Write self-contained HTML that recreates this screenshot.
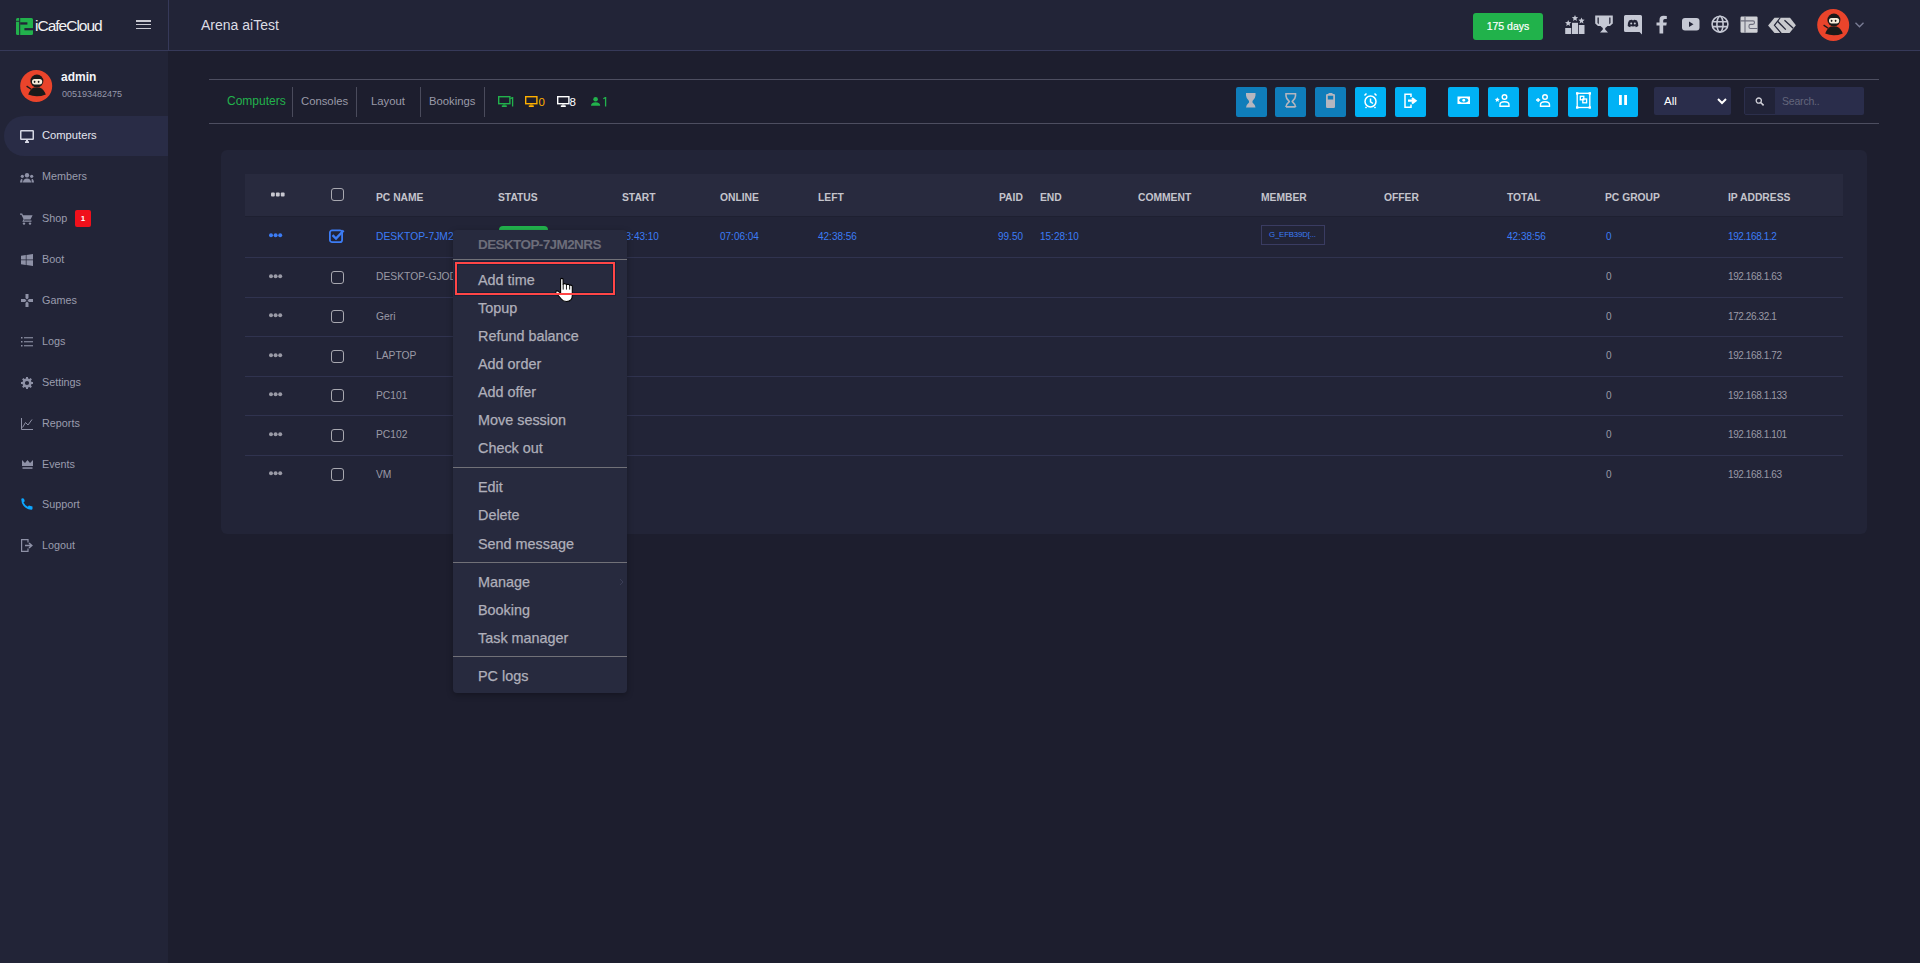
<!DOCTYPE html>
<html><head><meta charset="utf-8">
<style>
*{box-sizing:border-box;margin:0;padding:0}
html,body{width:1920px;height:963px;overflow:hidden;background:#1d1e2e;font-family:"Liberation Sans",sans-serif}
.abs{position:absolute}
#hdr{position:absolute;left:0;top:0;width:1920px;height:51px;background:#222437;border-bottom:1px solid #363959}
#side{position:absolute;left:0;top:51px;width:168px;height:912px;background:#222437}
.vdiv{position:absolute;left:168px;top:0;width:1px;height:50px;background:#363959}
.nav{position:absolute;left:0;width:168px;height:40px;font-size:11px;color:#9a9cae;white-space:nowrap}
.nav .ic{position:absolute;left:20px;top:13px}
.nav .tx{position:absolute;left:42px;top:13px;line-height:14px}
.nav.act{left:4px;width:164px;background:#292c46;border-radius:20px 0 0 20px}
.nav.act .ic{left:16px}.nav.act .tx{left:38px;color:#e6e8f0}
.tab{position:absolute;top:94px;font-size:11.3px;line-height:14px;color:#9a9aa8;white-space:nowrap}
.tdiv{position:absolute;top:87px;width:1px;height:30px;background:#4a4b5c}
.hline{position:absolute;left:209px;width:1670px;height:1px;background:#4d4e60}
.btn{position:absolute;top:87px;width:31px;height:30px;border-radius:2px;background:#00b2f5}
.btn.dim{background:#0f7dba}
.btn svg{position:absolute;left:0;top:0}
#card{position:absolute;left:221px;top:150px;width:1646px;height:384px;background:#222437;border-radius:6px}
#thead{position:absolute;left:245px;top:174px;width:1598px;height:42px;background:#282a3e}
.th{position:absolute;top:192.5px;font-size:10.3px;font-weight:700;color:#c4c4cc;line-height:10px;white-space:nowrap}
.row{position:absolute;left:245px;width:1598px;border-bottom:1px solid #33365a}
.td{position:absolute;font-size:10px;color:#9b9ba8;line-height:12px;white-space:nowrap}
.blue{color:#3c7cf5}
.cb{position:absolute;left:331px;width:13px;height:13px;border:1.5px solid #a8a8b0;border-radius:3px}
.dots{position:absolute;width:14px;height:4px}
#menu{position:absolute;left:453px;top:230px;width:174px;height:463px;background:#272a3e;border-radius:4px;box-shadow:0 2px 6px rgba(0,0,0,.3)}
.mi{position:absolute;left:478px;font-size:14.4px;color:#afafba;line-height:16px;white-space:nowrap;-webkit-text-stroke:0.25px #afafba}
.mdiv{position:absolute;left:453px;width:174px;height:1px;background:#717178}
</style></head><body>
<!-- HEADER -->
<div id="hdr">
  <div class="vdiv"></div>
  <!-- logo -->
  <svg class="abs" style="left:16px;top:18px" width="18" height="18" viewBox="0 0 18 18">
    <rect x="0" y="0" width="17" height="17" rx="1.5" fill="#22b14c"/>
    <rect x="3.2" y="0" width="1" height="17" fill="#222437"/>
    <rect x="0" y="2.8" width="3.2" height="0.9" fill="#222437"/>
    <rect x="4.2" y="4.3" width="7.2" height="2.3" fill="#222437"/>
    <rect x="8.4" y="10.1" width="8.6" height="2.2" fill="#222437"/>
  </svg>
  <div class="abs" style="left:35px;top:17px;font-size:15.5px;color:#f2f2f2;letter-spacing:-1px;line-height:18px;font-weight:400">iCafeCloud</div>
  <!-- hamburger -->
  <div class="abs" style="left:136px;top:20px;width:15px;height:1.6px;background:#c8c8d0"></div>
  <div class="abs" style="left:136px;top:23.8px;width:15px;height:1.6px;background:#c8c8d0"></div>
  <div class="abs" style="left:136px;top:27.6px;width:15px;height:1.6px;background:#c8c8d0"></div>
  <div class="abs" style="left:201px;top:17px;font-size:14px;color:#dcdce4;line-height:16px;white-space:nowrap">Arena aiTest</div>
  <!-- days -->
  <div class="abs" style="left:1473px;top:13px;width:70px;height:27px;background:#21b24b;border-radius:3px;color:#fff;font-size:10.5px;line-height:26px;text-align:center;-webkit-text-stroke:0.2px #fff">175 days</div>
  <!-- podium -->
  <svg class="abs" style="left:1565px;top:14px" width="20" height="21" viewBox="0 0 20 21" fill="#c5c8d4">
    <rect x="0.2" y="14" width="6" height="6"/><rect x="7" y="8.8" width="6" height="11.2"/><rect x="13.8" y="11" width="5.7" height="9"/>
    <path d="M3.20 6.00 L4.07 8.10 L6.34 8.28 L4.61 9.76 L5.14 11.97 L3.20 10.79 L1.26 11.97 L1.79 9.76 L0.06 8.28 L2.33 8.10Z"/>
    <path d="M10.00 1.00 L10.87 3.10 L13.14 3.28 L11.41 4.76 L11.94 6.97 L10.00 5.79 L8.06 6.97 L8.59 4.76 L6.86 3.28 L9.13 3.10Z"/>
    <path d="M16.50 3.50 L17.37 5.60 L19.64 5.78 L17.91 7.26 L18.44 9.47 L16.50 8.29 L14.56 9.47 L15.09 7.26 L13.36 5.78 L15.63 5.60Z"/>
  </svg>
  <!-- trophy -->
  <svg class="abs" style="left:1595px;top:15px" width="18" height="18" viewBox="0 0 18 18" fill="#c5c8d4">
    <path d="M0.2 0.5H17.8V8.5L15 11H12.5Q11 12.5 10.2 13V14.5L13 17.5H5L7.8 14.5V13Q7 12.5 5.5 11H3L0.2 8.5Z M2.5 2.5V8L3.8 9.2V2.5Z M15.5 2.5H14.2V9.2L15.5 8Z"/>
  </svg>
  <!-- discord -->
  <svg class="abs" style="left:1624px;top:15px" width="19" height="20" viewBox="0 0 19 20">
    <path d="M1.5 0H16.5Q18 0 18 1.5V19.5L15.5 17H1.5Q0 17 0 15.5V1.5Q0 0 1.5 0Z" fill="#c5c8d4"/>
    <path d="M5 5.5Q7 4.6 8 4.8L8.3 5.3Q9 5.2 9.7 5.3L10 4.8Q11 4.6 13 5.5Q14.5 8 14.3 11Q13 12 11.8 12.2L11.2 11.3Q12 11 12.3 10.7Q9 12.2 5.7 10.7Q6 11 6.8 11.3L6.2 12.2Q5 12 3.7 11Q3.5 8 5 5.5Z" fill="#222437"/>
    <circle cx="7.2" cy="8.6" r="1" fill="#c5c8d4"/><circle cx="10.8" cy="8.6" r="1" fill="#c5c8d4"/>
  </svg>
  <!-- facebook -->
  <svg class="abs" style="left:1656px;top:15px" width="12" height="19" viewBox="0 0 12 19" fill="#c5c8d4">
    <path d="M3.5 18.5V10.5H0.5V7.5H3.5V5Q3.5 0.8 7.5 0.8Q9.5 0.8 10.8 1V4H8.8Q7.2 4 7.2 5.5V7.5H10.8L10.3 10.5H7.2V18.5Z"/>
  </svg>
  <!-- youtube -->
  <svg class="abs" style="left:1682px;top:18px" width="18" height="13" viewBox="0 0 18 13">
    <rect x="0" y="0" width="17.5" height="12.5" rx="3" fill="#c5c8d4"/>
    <path d="M7 3.5V9L11.5 6.2Z" fill="#222437"/>
  </svg>
  <!-- globe -->
  <svg class="abs" style="left:1711px;top:15px" width="18" height="18" viewBox="0 0 18 18" fill="none" stroke="#c5c8d4" stroke-width="1.6">
    <circle cx="9" cy="9.2" r="7.9"/><ellipse cx="9" cy="9.2" rx="3.1" ry="7.9"/><path d="M1.3 6.8H16.7M1.3 11.6H16.7"/>
  </svg>
  <!-- icafe small -->
  <svg class="abs" style="left:1740px;top:16px" width="18" height="17" viewBox="0 0 18 17">
    <rect x="0.5" y="0.5" width="17.1" height="16.3" rx="1.2" fill="#d0d1d6"/>
    <path d="M5 0.5V16.8M0.5 4.9H13Q14.5 4.9 14.5 6.6Q14.5 8.4 12.8 8.4H10.5Q9 8.4 9 10V11Q9 12.5 10.5 12.5H17.6" stroke="#6c6d7c" stroke-width="1.1" fill="none"/>
  </svg>
  <!-- ggleap -->
  <svg class="abs" style="left:1764px;top:12px" width="36" height="26" viewBox="0 0 36 26">
    <path d="M4.1 13.4L10.5 5.8H26L31.9 13.3L25.6 21H10.5Z" fill="#c8c9ce"/>
    <path d="M16.4 5.5L10.4 13.3L17.3 21.3" stroke="#222437" stroke-width="1.2" fill="none"/>
    <path d="M13.6 9.3L21.8 17.6" stroke="#222437" stroke-width="1.3" fill="none"/>
    <path d="M20.5 8.3L29.2 16.3" stroke="#222437" stroke-width="1.3" fill="none"/>
  </svg>
  <!-- avatar -->
  <svg class="abs" style="left:1817px;top:9px" width="33" height="33" viewBox="0 0 33 33"><circle cx="16.2" cy="16" r="16" fill="#ea442b"/>
  <path d="M8.2 24.6Q10.3 19.2 13.8 17.6H19.6Q23.8 19.2 25.8 24.4Q17 28 8.2 24.6Z" fill="#1b1a1a"/>
  <circle cx="16.9" cy="11" r="6.5" fill="#1b1a1a"/>
  <rect x="12" y="9" width="10.2" height="5.4" rx="2.6" fill="#f6eddb"/>
  <ellipse cx="14.6" cy="11.8" rx="0.9" ry="1.1" fill="#1b1a1a"/><ellipse cx="18.6" cy="11.8" rx="0.9" ry="1.1" fill="#1b1a1a"/>
  <path d="M6.6 16.1L11.2 19.3" stroke="#1b1a1a" stroke-width="1.4"/></svg>
  <svg class="abs" style="left:1855px;top:22px" width="9" height="6" viewBox="0 0 9 6" fill="none" stroke="#7a7d95" stroke-width="1.3"><path d="M0.5 0.7L4.5 4.8L8.5 0.7"/></svg>
</div>

<!-- SIDEBAR -->
<div id="side"></div>
<!-- profile -->
<svg class="abs" style="left:20px;top:70px" width="33" height="33" viewBox="0 0 33 33"><circle cx="16.2" cy="16" r="16" fill="#ea442b"/>
  <path d="M8.2 24.6Q10.3 19.2 13.8 17.6H19.6Q23.8 19.2 25.8 24.4Q17 28 8.2 24.6Z" fill="#1b1a1a"/>
  <circle cx="16.9" cy="11" r="6.5" fill="#1b1a1a"/>
  <rect x="12" y="9" width="10.2" height="5.4" rx="2.6" fill="#f6eddb"/>
  <ellipse cx="14.6" cy="11.8" rx="0.9" ry="1.1" fill="#1b1a1a"/><ellipse cx="18.6" cy="11.8" rx="0.9" ry="1.1" fill="#1b1a1a"/>
  <path d="M6.6 16.1L11.2 19.3" stroke="#1b1a1a" stroke-width="1.4"/></svg>
<div class="abs" style="left:61px;top:71px;font-size:12px;font-weight:700;color:#f4f4f8;line-height:13px">admin</div>
<div class="abs" style="left:62px;top:89px;font-size:9px;color:#9698aa;line-height:10px">005193482475</div>

<div class="nav act" style="top:116px">
  <svg class="ic" style="left:16px;top:14px" width="14" height="13" viewBox="0 0 14 13" fill="none" stroke="#d6d8e4" stroke-width="1.5"><rect x="0.75" y="0.75" width="12.5" height="8.5" rx="0.5"/><path d="M5 12.2H9M7 9.5V12" stroke-width="2"/></svg>
  <div class="tx" style="top:12px;font-size:11.2px;color:#e4e6ef">Computers</div>
</div>
<div class="nav" style="top:156px">
  <svg class="ic" style="top:17px" width="14" height="10" viewBox="0 0 14 10" fill="#8e91a6"><circle cx="7" cy="2.2" r="2.2"/><circle cx="2.3" cy="3.3" r="1.6"/><circle cx="11.7" cy="3.3" r="1.6"/><path d="M2.8 9.5Q3.5 5.5 7 5.5Q10.5 5.5 11.2 9.5Z"/><path d="M0 9.5Q0.3 6 2.3 5.8L2.5 9.5Z M14 9.5Q13.7 6 11.7 5.8L11.5 9.5Z"/></svg>
  <div class="tx" style="font-size:10.8px">Members</div>
</div>
<div class="nav" style="top:198px">
  <svg class="ic" style="top:15px" width="13" height="12" viewBox="0 0 13 12" fill="#8e91a6"><path d="M0 0.5H2.2L3 2.2H12.6L10.5 6.5H4.4L3.8 7.5H11.5V8.7H2.3L3.6 6.3L1.4 1.7H0Z"/><circle cx="4" cy="10.6" r="1.2"/><circle cx="10" cy="10.6" r="1.2"/></svg>
  <div class="tx" style="font-size:10.8px">Shop</div>
  <div class="abs" style="left:75px;top:12px;width:16px;height:17px;background:#f0101b;border-radius:2px;color:#fff;font-size:8px;font-weight:700;line-height:17px;text-align:center">1</div>
</div>
<div class="nav" style="top:239px">
  <svg class="ic" style="left:21px;top:15px" width="12" height="12" viewBox="0 0 12 12" fill="#8e91a6"><path d="M0 1.8L4.8 1.1V5.6H0Z M5.5 1L12 0V5.6H5.5Z M0 6.3H4.8V10.9L0 10.2Z M5.5 6.3H12V12L5.5 11Z"/></svg>
  <div class="tx" style="font-size:10.8px">Boot</div>
</div>
<div class="nav" style="top:280px">
  <svg class="ic" style="left:21px;top:14px" width="12" height="13" viewBox="0 0 12 13" fill="#8e91a6"><path d="M4.5 0H7.5V4L6 5.5L4.5 4Z M4.5 13H7.5V9L6 7.5L4.5 9Z M0 5H4L5.5 6.5L4 8H0Z M12 5H8L6.5 6.5L8 8H12Z"/></svg>
  <div class="tx" style="font-size:10.8px">Games</div>
</div>
<div class="nav" style="top:321px">
  <svg class="ic" style="left:21px;top:16px" width="12" height="10" viewBox="0 0 12 10" fill="#8e91a6"><rect x="0" y="0" width="1.5" height="1.5"/><rect x="0" y="4" width="1.5" height="1.5"/><rect x="0" y="8" width="1.5" height="1.5"/><rect x="3" y="0.2" width="9" height="1.1"/><rect x="3" y="4.2" width="9" height="1.1"/><rect x="3" y="8.2" width="9" height="1.1"/></svg>
  <div class="tx" style="font-size:10.8px">Logs</div>
</div>
<div class="nav" style="top:362px">
  <svg class="ic" style="left:21px;top:15px" width="12" height="12" viewBox="0 0 12 12" fill="#8e91a6" fill-rule="evenodd"><path d="M4.92 1.53 L5.08 -0.03 L6.92 -0.03 L7.08 1.53 L8.40 2.07 L9.61 1.09 L10.91 2.39 L9.93 3.60 L10.47 4.92 L12.03 5.08 L12.03 6.92 L10.47 7.08 L9.93 8.40 L10.91 9.61 L9.61 10.91 L8.40 9.93 L7.08 10.47 L6.92 12.03 L5.08 12.03 L4.92 10.47 L3.60 9.93 L2.39 10.91 L1.09 9.61 L2.07 8.40 L1.53 7.08 L-0.03 6.92 L-0.03 5.08 L1.53 4.92 L2.07 3.60 L1.09 2.39 L2.39 1.09 L3.60 2.07Z M6 3.9 A2.1 2.1 0 1 0 6 8.1 A2.1 2.1 0 1 0 6 3.9Z"/></svg>
  <div class="tx" style="font-size:10.8px">Settings</div>
</div>
<div class="nav" style="top:403px">
  <svg class="ic" style="left:21px;top:15px" width="12" height="12" viewBox="0 0 12 12" fill="none" stroke="#8e91a6" stroke-width="1"><path d="M0.5 0V11.5H12M1.5 9.5L4.5 4.5L7 7L11 1.5"/></svg>
  <div class="tx" style="font-size:10.8px">Reports</div>
</div>
<div class="nav" style="top:444px">
  <svg class="ic" style="left:22px;top:16px" width="11" height="9" viewBox="0 0 11 9" fill="#8e91a6"><path d="M0 0L3 3L5.5 0L8 3L11 0V6H0Z"/><rect x="0.5" y="7.3" width="10" height="1.5"/></svg>
  <div class="tx" style="font-size:10.8px">Events</div>
</div>
<div class="nav" style="top:484px">
  <svg class="ic" style="left:21px;top:14px" width="12" height="12" viewBox="0 0 12 12" fill="#0ca6ff"><path d="M0.3 1.5Q0.3 0.3 1.6 0.3L3 0.7L3.8 3.2L2.5 4.2Q3.5 6.8 6.8 8.8L7.9 7.6L11.5 8.5V10.8Q11.5 11.8 10.3 11.8Q5.5 11.5 2.3 7.5Q0.3 4.6 0.3 1.5Z"/></svg>
  <div class="tx" style="font-size:10.8px">Support</div>
</div>
<div class="nav" style="top:525px">
  <svg class="ic" style="left:21px;top:14px" width="12" height="13" viewBox="0 0 12 13" fill="none" stroke="#8e91a6" stroke-width="1.2"><path d="M7 3.5V0.6H0.6V12.4H7V9.5"/><path d="M4 6.5H10M8 4L10.8 6.5L8 9" stroke-width="1.5"/></svg>
  <div class="tx" style="font-size:10.8px">Logout</div>
</div>

<!-- TOOLBAR LINES -->
<div class="hline" style="top:79px"></div>
<div class="hline" style="top:123px"></div>
<!-- tabs -->
<div class="tab" style="left:227px;color:#22b24c;font-size:12px">Computers</div>
<div class="tdiv" style="left:292px"></div>
<div class="tab" style="left:301px">Consoles</div>
<div class="tdiv" style="left:356px"></div>
<div class="tab" style="left:371px">Layout</div>
<div class="tdiv" style="left:420px"></div>
<div class="tab" style="left:429px">Bookings</div>
<div class="tdiv" style="left:484px"></div>
<svg class="abs" style="left:497.5px;top:96px" width="13" height="11" viewBox="0 0 13 11" fill="none" stroke="#22b24c" stroke-width="1.4"><rect x="0.7" y="0.7" width="11.2" height="7"/><path d="M3.8 10.2H8.8" stroke-width="1.6"/><path d="M5.2 8.4L4.6 9.6H8L7.4 8.4Z" fill="#22b24c" stroke="none"/></svg>
<svg class="abs" style="left:510.3px;top:97px" width="4" height="10" viewBox="0 0 4 10" fill="none" stroke="#22b24c" stroke-width="1.3"><path d="M0.3 1.8L2.6 0.4V9.6"/></svg>
<svg class="abs" style="left:525px;top:96px" width="13" height="11" viewBox="0 0 13 11" fill="none" stroke="#ffb000" stroke-width="1.4"><rect x="0.7" y="0.7" width="11.2" height="7"/><path d="M3.8 10.2H8.8" stroke-width="1.6"/><path d="M5.2 8.4L4.6 9.6H8L7.4 8.4Z" fill="#ffb000" stroke="none"/></svg>
<div class="abs" style="left:538.5px;top:95.5px;font-size:11.5px;line-height:13px;color:#ffb000">0</div>
<svg class="abs" style="left:557px;top:96px" width="13" height="11" viewBox="0 0 13 11" fill="none" stroke="#ffffff" stroke-width="1.4"><rect x="0.7" y="0.7" width="11.2" height="7"/><path d="M3.8 10.2H8.8" stroke-width="1.6"/><path d="M5.2 8.4L4.6 9.6H8L7.4 8.4Z" fill="#ffffff" stroke="none"/></svg>
<div class="abs" style="left:569.5px;top:95.5px;font-size:11.5px;line-height:13px;color:#ffffff">8</div>
<svg class="abs" style="left:591px;top:97px" width="10" height="9" viewBox="0 0 10 9" fill="#22b24c"><circle cx="4.6" cy="2.3" r="2.3"/><path d="M0 8.8Q0 5.3 4.6 5.3Q9.2 5.3 9.2 8.8Z"/></svg>
<svg class="abs" style="left:602.5px;top:97px" width="4" height="10" viewBox="0 0 4 10" fill="none" stroke="#22b24c" stroke-width="1.3"><path d="M0.3 1.8L2.6 0.4V9.6"/></svg>

<!-- buttons -->
<div class="btn dim" style="left:1236px"><svg width="30" height="30" viewBox="0 0 30 30" fill="#b4b6bf"><path d="M10 6H19.5V8.5Q19.5 11 16.5 14V15.5Q19.5 18 19.5 20.5V20.5H10V20.5Q10 18 13 15.5V14Q10 11 10 8.5Z"/></svg></div>
<div class="btn dim" style="left:1275px"><svg width="31" height="30" viewBox="0 0 31 30" fill="none" stroke="#b4b6bf" stroke-width="1.6"><path d="M11 6.8H20.5V9Q20.5 11.5 17.3 14.3V14.7Q20.5 17.5 20.5 20V19.9H11V20Q11 17.5 14.2 14.7V14.3Q11 11.5 11 9Z"/></svg></div>
<div class="btn dim" style="left:1315px"><svg width="31" height="30" viewBox="0 0 31 30" fill="#b4b6bf"><path d="M11 8.2Q11 7 12.2 7H13.5V6H17.5V7H18.8Q20 7 20 8.2V19.8Q20 21 18.8 21H12.2Q11 21 11 19.8Z M12.8 8.8V12.6H18.2V8.8Z"/></svg></div>
<div class="btn" style="left:1355px"><svg width="31" height="30" viewBox="0 0 31 30" fill="none" stroke="#fff" stroke-width="1.5"><circle cx="15.5" cy="14.5" r="5.5"/><path d="M15.5 11.5V14.8L18 16.5"/><path d="M9.5 8.5L11.5 6.5M21.5 8.5L19.5 6.5M11.5 20L10.5 21M19.5 20L20.5 21"/></svg></div>
<div class="btn" style="left:1395px"><svg width="31" height="30" viewBox="0 0 31 30" fill="none" stroke="#fff" stroke-width="1.5"><path d="M16 10V7.2H10V20.2H16V17.5"/><path d="M13 13.7H19M17 11L20.5 13.7L17 16.5" stroke-width="2.2"/></svg></div>

<div class="btn" style="left:1448px"><svg width="31" height="30" viewBox="0 0 31 30"><rect x="9.5" y="9.5" width="12.5" height="7.5" fill="#fff"/><ellipse cx="15.75" cy="13.25" rx="4.5" ry="2.3" fill="#00b2f5"/><circle cx="15.75" cy="13.25" r="1.4" fill="#fff"/></svg></div>
<div class="btn" style="left:1488px"><svg width="31" height="30" viewBox="0 0 31 30" fill="none" stroke="#fff" stroke-width="1.4"><circle cx="16.5" cy="10" r="2.3"/><path d="M12 19.3V17.8Q12 14.8 16.5 14.8Q21 14.8 21 17.8V19.3Z"/><path d="M9.3 10.2l.75 1.55 1.7.25-1.25 1.2.3 1.7-1.5-.8-1.5.8.3-1.7-1.25-1.2 1.7-.25z" fill="#fff" stroke="none"/></svg></div>
<div class="btn" style="left:1528px;width:30px"><svg width="30" height="30" viewBox="0 0 30 30" fill="none" stroke="#fff" stroke-width="1.4"><circle cx="17" cy="10" r="2.3"/><path d="M12.5 19.3V17.8Q12.5 14.8 17 14.8Q21.5 14.8 21.5 17.8V19.3Z"/><path d="M8 13H12.2M10.1 10.9V15.1" stroke-width="1.3"/></svg></div>
<div class="btn" style="left:1568px;width:30px"><svg width="30" height="30" viewBox="0 0 30 30" fill="none" stroke="#fff" stroke-width="1.3"><rect x="9.2" y="6.3" width="12.6" height="14.2"/><rect x="8" y="5.2" width="2.4" height="2.4" fill="#fff" stroke="none"/><rect x="20.6" y="5.2" width="2.4" height="2.4" fill="#fff" stroke="none"/><rect x="8" y="19.3" width="2.4" height="2.4" fill="#fff" stroke="none"/><rect x="20.6" y="19.3" width="2.4" height="2.4" fill="#fff" stroke="none"/><rect x="12.3" y="9.3" width="3.5" height="3.5"/><rect x="14.8" y="12" width="3.8" height="3.8"/></svg></div>
<div class="btn" style="left:1608px;width:30px"><svg width="30" height="30" viewBox="0 0 30 30" fill="#fff"><rect x="11" y="8" width="2.8" height="10"/><rect x="16.2" y="8" width="2.8" height="10"/></svg></div>

<!-- select -->
<div class="abs" style="left:1654px;top:87px;width:77px;height:28px;background:#2a2d4b;border-radius:2px"></div>
<div class="abs" style="left:1664px;top:95px;font-size:11.5px;line-height:13px;color:#ffffff">All</div>
<svg class="abs" style="left:1717px;top:98px" width="10" height="7" viewBox="0 0 10 7" fill="none" stroke="#fff" stroke-width="2"><path d="M1 1L5 5L9 1"/></svg>
<!-- search -->
<div class="abs" style="left:1744px;top:87px;width:32px;height:28px;background:#212338;border:1px solid #2c2f4c;border-radius:2px 0 0 2px"></div>
<svg class="abs" style="left:1755px;top:97px" width="10" height="9" viewBox="0 0 10 9" fill="none" stroke="#d0d0d8" stroke-width="1.3"><circle cx="3.8" cy="3.6" r="2.6"/><path d="M5.7 5.5L8.6 8.3" stroke-width="1.6"/></svg>
<div class="abs" style="left:1775px;top:87px;width:89px;height:28px;background:#2a2d4b;border-radius:0 2px 2px 0"></div>
<div class="abs" style="left:1782px;top:95px;font-size:10.5px;line-height:13px;color:#64667c;letter-spacing:-0.2px">Search..</div>

<div id="card"></div>
<div id="thead"></div>
<div class="abs" style="left:245px;top:216px;width:1598px;height:1px;background:#1e2031"></div>
<svg class="abs" style="left:271px;top:192px" width="14" height="5" viewBox="0 0 14 5" fill="#c8c8d0"><rect x="0" y="0.5" width="3.8" height="4" rx="1"/><rect x="4.9" y="0.5" width="3.8" height="4" rx="1"/><rect x="9.8" y="0.5" width="3.8" height="4" rx="1"/></svg>
<div class="cb" style="top:188px;width:13px;height:13px"></div>
<div class="th" style="left:376px">PC NAME</div>
<div class="th" style="left:498px">STATUS</div>
<div class="th" style="left:622px">START</div>
<div class="th" style="left:720px">ONLINE</div>
<div class="th" style="left:818px">LEFT</div>
<div class="th" style="left:999px">PAID</div>
<div class="th" style="left:1040px">END</div>
<div class="th" style="left:1138px">COMMENT</div>
<div class="th" style="left:1261px">MEMBER</div>
<div class="th" style="left:1384px">OFFER</div>
<div class="th" style="left:1507px">TOTAL</div>
<div class="th" style="left:1605px">PC GROUP</div>
<div class="th" style="left:1728px">IP ADDRESS</div>
<div class="abs" style="left:245px;top:257px;width:1598px;height:1px;background:#30334f"></div>
<svg class="abs" style="left:269px;top:233.0px" width="14" height="5" viewBox="0 0 14 5" fill="#3c7cf5"><circle cx="2" cy="2.3" r="2"/><circle cx="6.6" cy="2.3" r="2"/><circle cx="11.2" cy="2.3" r="2"/></svg>
<svg class="abs" style="left:329px;top:228.5px" width="16" height="14" viewBox="0 0 16 14" fill="none" stroke="#3c7cf5"><rect x="0.9" y="1.4" width="12.2" height="11.7" rx="2.2" stroke-width="1.8"/><path d="M3.5 6.2L7 9.5L14.6 1.5" stroke-width="2.4"/></svg>
<div class="td" style="left:376px;top:230.5px;color:#3c7cf5;font-size:10.3px">DESKTOP-7JM2N</div>
<div class="td" style="left:1606px;top:230.5px;color:#3c7cf5">0</div>
<div class="td" style="left:1728px;top:230.5px;color:#3c7cf5;letter-spacing:-0.4px">192.168.1.2</div>
<div class="abs" style="left:245px;top:297px;width:1598px;height:1px;background:#30334f"></div>
<svg class="abs" style="left:269px;top:273.5px" width="14" height="5" viewBox="0 0 14 5" fill="#9a9aa6"><circle cx="2" cy="2.3" r="2"/><circle cx="6.6" cy="2.3" r="2"/><circle cx="11.2" cy="2.3" r="2"/></svg>
<div class="cb" style="top:270.5px"></div>
<div class="td" style="left:376px;top:271.0px;color:#9a9aa6;font-size:10.3px">DESKTOP-GJOD:</div>
<div class="td" style="left:1606px;top:271.0px;color:#9a9aa6">0</div>
<div class="td" style="left:1728px;top:271.0px;color:#9a9aa6;letter-spacing:-0.4px">192.168.1.63</div>
<div class="abs" style="left:245px;top:336px;width:1598px;height:1px;background:#30334f"></div>
<svg class="abs" style="left:269px;top:313.0px" width="14" height="5" viewBox="0 0 14 5" fill="#9a9aa6"><circle cx="2" cy="2.3" r="2"/><circle cx="6.6" cy="2.3" r="2"/><circle cx="11.2" cy="2.3" r="2"/></svg>
<div class="cb" style="top:310.0px"></div>
<div class="td" style="left:376px;top:310.5px;color:#9a9aa6;font-size:10.3px">Geri</div>
<div class="td" style="left:1606px;top:310.5px;color:#9a9aa6">0</div>
<div class="td" style="left:1728px;top:310.5px;color:#9a9aa6;letter-spacing:-0.4px">172.26.32.1</div>
<div class="abs" style="left:245px;top:376px;width:1598px;height:1px;background:#30334f"></div>
<svg class="abs" style="left:269px;top:352.5px" width="14" height="5" viewBox="0 0 14 5" fill="#9a9aa6"><circle cx="2" cy="2.3" r="2"/><circle cx="6.6" cy="2.3" r="2"/><circle cx="11.2" cy="2.3" r="2"/></svg>
<div class="cb" style="top:349.5px"></div>
<div class="td" style="left:376px;top:350.0px;color:#9a9aa6;font-size:10.3px">LAPTOP</div>
<div class="td" style="left:1606px;top:350.0px;color:#9a9aa6">0</div>
<div class="td" style="left:1728px;top:350.0px;color:#9a9aa6;letter-spacing:-0.4px">192.168.1.72</div>
<div class="abs" style="left:245px;top:415px;width:1598px;height:1px;background:#30334f"></div>
<svg class="abs" style="left:269px;top:392.0px" width="14" height="5" viewBox="0 0 14 5" fill="#9a9aa6"><circle cx="2" cy="2.3" r="2"/><circle cx="6.6" cy="2.3" r="2"/><circle cx="11.2" cy="2.3" r="2"/></svg>
<div class="cb" style="top:389.0px"></div>
<div class="td" style="left:376px;top:389.5px;color:#9a9aa6;font-size:10.3px">PC101</div>
<div class="td" style="left:1606px;top:389.5px;color:#9a9aa6">0</div>
<div class="td" style="left:1728px;top:389.5px;color:#9a9aa6;letter-spacing:-0.4px">192.168.1.133</div>
<div class="abs" style="left:245px;top:455px;width:1598px;height:1px;background:#30334f"></div>
<svg class="abs" style="left:269px;top:431.5px" width="14" height="5" viewBox="0 0 14 5" fill="#9a9aa6"><circle cx="2" cy="2.3" r="2"/><circle cx="6.6" cy="2.3" r="2"/><circle cx="11.2" cy="2.3" r="2"/></svg>
<div class="cb" style="top:428.5px"></div>
<div class="td" style="left:376px;top:429.0px;color:#9a9aa6;font-size:10.3px">PC102</div>
<div class="td" style="left:1606px;top:429.0px;color:#9a9aa6">0</div>
<div class="td" style="left:1728px;top:429.0px;color:#9a9aa6;letter-spacing:-0.4px">192.168.1.101</div>
<svg class="abs" style="left:269px;top:471.0px" width="14" height="5" viewBox="0 0 14 5" fill="#9a9aa6"><circle cx="2" cy="2.3" r="2"/><circle cx="6.6" cy="2.3" r="2"/><circle cx="11.2" cy="2.3" r="2"/></svg>
<div class="cb" style="top:468.0px"></div>
<div class="td" style="left:376px;top:468.5px;color:#9a9aa6;font-size:10.3px">VM</div>
<div class="td" style="left:1606px;top:468.5px;color:#9a9aa6">0</div>
<div class="td" style="left:1728px;top:468.5px;color:#9a9aa6;letter-spacing:-0.4px">192.168.1.63</div>
<div class="abs" style="left:499px;top:226px;width:49px;height:20px;background:#22b24c;border-radius:4px"></div>
<div class="td blue" style="left:620px;top:230.5px">13:43:10</div>
<div class="td blue" style="left:720px;top:230.5px">07:06:04</div>
<div class="td blue" style="left:818px;top:230.5px">42:38:56</div>
<div class="td blue" style="left:1040px;top:230.5px">15:28:10</div>
<div class="td blue" style="left:1507px;top:230.5px">42:38:56</div>
<div class="td blue" style="left:998px;top:230.5px">99.50</div>
<div class="abs" style="left:1261px;top:225px;width:64px;height:20px;border:1px solid #3a3c62"></div>
<div class="abs" style="left:1269px;top:229.8px;font-size:7.8px;line-height:9px;color:#3c7cf5;white-space:nowrap;letter-spacing:-0.15px">G_EFB39D[...</div>

<div id="menu"></div>
<div class="abs" style="left:478px;top:237.8px;font-size:13.5px;letter-spacing:-0.6px;font-weight:700;color:#6c6d7a;line-height:14px;white-space:nowrap">DESKTOP-7JM2NRS</div>
<div class="mdiv" style="top:259px"></div>
<div class="mdiv" style="top:466.5px"></div>
<div class="mdiv" style="top:561.5px"></div>
<div class="mdiv" style="top:656px"></div>
<div class="mi" style="top:271.9px">Add time</div>
<div class="mi" style="top:299.9px">Topup</div>
<div class="mi" style="top:328.3px">Refund balance</div>
<div class="mi" style="top:356.2px">Add order</div>
<div class="mi" style="top:384.1px">Add offer</div>
<div class="mi" style="top:412.0px">Move session</div>
<div class="mi" style="top:440.4px">Check out</div>
<div class="mi" style="top:478.9px">Edit</div>
<div class="mi" style="top:506.9px">Delete</div>
<div class="mi" style="top:535.9px">Send message</div>
<div class="mi" style="top:573.9px">Manage</div>
<div class="mi" style="top:602.2px">Booking</div>
<div class="mi" style="top:630.2px">Task manager</div>
<div class="mi" style="top:668.1px">PC logs</div>
<div class="abs" style="left:454px;top:261px;width:162px;height:35px;border:4px solid rgba(12,28,52,.55)"></div>
<svg class="abs" style="left:554px;top:277px" width="21" height="26" viewBox="0 0 21 26">
<path d="M6.6 2.6Q6.6 1.4 7.85 1.4Q9.1 1.4 9.1 2.6V7.5Q9.1 6.6 10.8 6.6Q12.3 6.6 12.4 7.8Q12.6 7.2 14 7.2Q15.5 7.3 15.6 8.5Q15.9 8 17 8.1Q18.3 8.3 18.3 9.6V18.5Q18.3 24.5 12.5 24.5Q9 24.5 7.3 22L2.2 16.2Q1.2 15 2 14.3Q3 13.5 4.3 14.3L6.6 16.2Z" fill="#fff" stroke="#000" stroke-width="1.1" stroke-linejoin="round"/>
<path d="M9.2 7.6V12.6M12.45 8V12.6M15.65 8.6V12.6" stroke="#000" stroke-width="0.9"/>
</svg>
<div class="abs" style="left:455px;top:262px;width:160px;height:33px;border:2px solid #ff4646"></div>
<svg class="abs" style="left:619px;top:578px" width="5" height="8" viewBox="0 0 5 8" fill="none" stroke="#3a3d55" stroke-width="1"><path d="M1 1L4 4L1 7"/></svg>

</body></html>
